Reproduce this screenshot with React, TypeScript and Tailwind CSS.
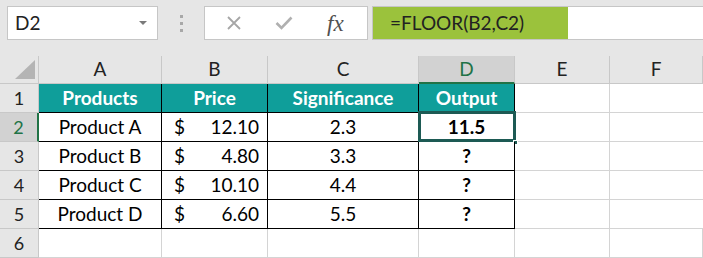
import React from 'react';

const COLS = [
  { key: 'A', w: 'w-[123px]' },
  { key: 'B', w: 'w-[106px]' },
  { key: 'C', w: 'w-[151px]' },
  { key: 'D', w: 'w-[96px]' },
  { key: 'E', w: 'w-[95px]' },
  { key: 'F', w: 'flex-1' },
];

const rows = [
  { name: 'Product A', price: '12.10', sig: '2.3', out: '11.5' },
  { name: 'Product B', price: '4.80', sig: '3.3', out: '?' },
  { name: 'Product C', price: '10.10', sig: '4.4', out: '?' },
  { name: 'Product D', price: '6.60', sig: '5.5', out: '?' },
];

const font = { fontFamily: 'Lato, "Open Sans", sans-serif' };

function RowHead({ n, active }: { n: number; active?: boolean }) {
  return (
    <div
      className={`w-[39px] shrink-0 h-full flex items-center justify-center border-b border-[#c8c8c8] text-[18px] ${
        active ? 'bg-[#d2d2d2] text-[#217346] border-r-2 border-r-[#217346]' : 'bg-[#e6e6e6] text-[#222] border-r border-r-[#c8c8c8]'
      }`}
    >
      {n}
    </div>
  );
}

export default function App() {
  return (
    <div className="w-[703px] h-[258px] overflow-hidden bg-white text-black" style={font}>
      {/* formula bar */}
      <div className="h-[56px] bg-[#e6e6e6] flex items-start pt-[6px]">
        <div className="ml-[7px] w-[151px] h-[34px] bg-white border border-[#c6c6c6] flex items-center pl-[7px] pr-[10px] text-[19px] text-[#222]">
          <span className="flex-1">D2</span>
          <span className="w-0 h-0 border-l-[4px] border-r-[4px] border-t-[4px] border-l-transparent border-r-transparent border-t-[#7a7a7a]" />
        </div>
        <div className="w-[46px] h-[34px] flex flex-col items-center justify-center gap-[4px]">
          <span className="w-[3px] h-[3px] bg-[#a8a8a8]" />
          <span className="w-[3px] h-[3px] bg-[#a8a8a8]" />
          <span className="w-[3px] h-[3px] bg-[#a8a8a8]" />
        </div>
        <div className="w-[164px] h-[34px] bg-white border border-[#c6c6c6] flex items-center">
          <svg className="ml-[21px]" width="16" height="16" viewBox="0 0 16 16">
            <path d="M2 2 L14 14 M14 2 L2 14" stroke="#a6a6a6" strokeWidth="1.8" />
          </svg>
          <svg className="ml-[33px]" width="18" height="14" viewBox="0 0 18 14">
            <path d="M1.5 7 L6.5 12 L16.5 1.5" stroke="#b0b0b0" strokeWidth="2.6" fill="none" />
          </svg>
          <span
            className="ml-[34px] text-[23px] italic text-[#505050] leading-none"
            style={{ fontFamily: '"Liberation Serif", serif' }}
          >
            fx
          </span>
        </div>
        <div className="ml-[4px] flex-1 h-[34px] bg-white border border-[#c6c6c6] border-r-0 flex">
          <div className="w-[195px] h-full bg-[#9bc23c] flex items-center pl-[17px] text-[19px] text-[#222]">
            =FLOOR(B2,C2)
          </div>
        </div>
      </div>

      {/* column headers */}
      <div className="h-[28px] flex bg-[#e6e6e6] text-[19px] text-[#222]">
        <div className="w-[39px] shrink-0 h-full border-r border-b border-[#c8c8c8] relative">
          <span
            className="absolute right-[3px] bottom-[4px] w-0 h-0"
            style={{ borderBottom: '19px solid #b4b4b4', borderLeft: '20px solid transparent' }}
          />
        </div>
        {COLS.map((c) => (
          <div
            key={c.key}
            className={`${c.w} shrink-0 h-full flex items-center justify-center border-r border-[#c8c8c8] ${
              c.key === 'D' ? 'bg-[#d2d2d2] text-[#217346] border-b-2 border-b-[#217346]' : 'border-b'
            }`}
          >
            {c.key}
          </div>
        ))}
      </div>

      {/* row 1 */}
      <div className="h-[29px] flex">
        <RowHead n={1} />
        <div className="w-[123px] shrink-0 bg-[#0f9e9a] text-white font-bold text-[19px] flex items-center justify-center border-r border-b border-black">Products</div>
        <div className="w-[106px] shrink-0 bg-[#0f9e9a] text-white font-bold text-[19px] flex items-center justify-center border-r border-b border-black">Price</div>
        <div className="w-[151px] shrink-0 bg-[#0f9e9a] text-white font-bold text-[19px] flex items-center justify-center border-r border-b border-black">Significance</div>
        <div className="w-[96px] shrink-0 bg-[#0f9e9a] text-white font-bold text-[19px] flex items-center justify-center border-r border-b border-black">Output</div>
        <div className="w-[95px] shrink-0 border-r border-b border-[#d4d4d4]" />
        <div className="flex-1 border-b border-[#d4d4d4]" />
      </div>

      {rows.map((r, i) => (
        <div key={r.name} className="h-[29px] flex text-[19px]">
          <RowHead n={i + 2} active={i === 0} />
          <div className="w-[123px] shrink-0 flex items-center justify-center border-r border-b border-black">{r.name}</div>
          <div className="w-[106px] shrink-0 flex items-center pl-[12px] pr-[8px] border-r border-b border-black">
            <span className="flex-1">$</span>
            <span>{r.price}</span>
          </div>
          <div className="w-[151px] shrink-0 flex items-center justify-center border-r border-b border-black">{r.sig}</div>
          <div className="w-[96px] shrink-0 relative flex items-center justify-center font-bold border-r border-b border-black">
            {r.out}
            {i === 0 && (
              <>
                <span className="absolute left-[-1px] top-[-2px] right-[-2px] bottom-[-1px] border-[3px] border-[#1d5a54]" />
                <span className="absolute right-[-4px] bottom-[-4px] w-[5px] h-[5px] bg-[#1d5a54] border border-white" />
              </>
            )}
          </div>
          <div className="w-[95px] shrink-0 border-r border-b border-[#d4d4d4]" />
          <div className="flex-1 border-b border-[#d4d4d4]" />
        </div>
      ))}

      <div className="h-[29px] flex">
        <RowHead n={6} />
        {COLS.map((c) => (
          <div key={c.key} className={`${c.w} shrink-0 border-r border-b border-[#d4d4d4]`} />
        ))}
      </div>
    </div>
  );
}
